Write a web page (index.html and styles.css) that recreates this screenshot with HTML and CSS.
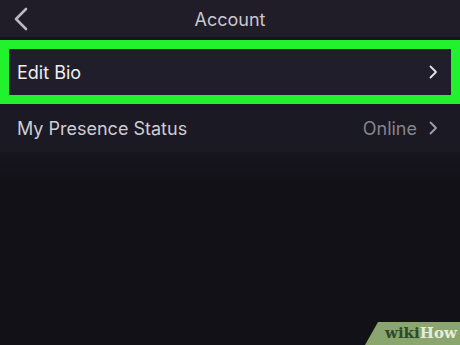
FILE: index.html
```html
<!DOCTYPE html>
<html>
<head>
<meta charset="utf-8">
<link rel="stylesheet" href="styles.css">
</head>
<body>
<div class="screen">
  <header class="nav">
    <svg class="back" width="16" height="24" viewBox="0 0 16 24"><path d="M13 2 L3 12 L13 22" fill="none" stroke="#b9b7c0" stroke-width="2.6" stroke-linecap="round" stroke-linejoin="round"/></svg>
    <div class="title">Account</div>
  </header>
  <div class="divider"></div>
  <div class="highlight">
    <div class="row row-bio">
      <span class="label">Edit Bio</span>
      <svg class="chev" width="9" height="14" viewBox="0 0 9 14"><path d="M1.5 1.5 L7 7 L1.5 12.5" fill="none" stroke="#e4e2e8" stroke-width="1.8" stroke-linecap="round" stroke-linejoin="round"/></svg>
    </div>
  </div>
  <div class="row row-status">
    <span class="label dim">My Presence Status</span>
    <span class="value">Online</span>
    <svg class="chev" width="9" height="14" viewBox="0 0 9 14"><path d="M1.5 1.5 L7 7 L1.5 12.5" fill="none" stroke="#a09ea6" stroke-width="1.8" stroke-linecap="round" stroke-linejoin="round"/></svg>
  </div>
  <div class="rest">
    <div class="wm"><span class="wiki">wiki</span><span class="how">How</span></div>
  </div>
</div>
</body>
</html>
```

FILE: styles.css
```css
html, body {
  margin: 0;
  padding: 0;
  background: #121118;
}
.screen {
  width: 460px;
  height: 345px;
  overflow: hidden;
  display: flex;
  flex-direction: column;
  font-family: Inter, "Liberation Sans", Arial, sans-serif;
  background: #121118;
}
.nav {
  height: 37px;
  background: #201d29;
  display: flex;
  align-items: center;
  justify-content: center;
  position: relative;
}
.back {
  position: absolute;
  left: 13px;
  top: 7px;
}
.title {
  color: #c9c7ce;
  font-size: 18px;
  margin-top: 2px;
}
.divider {
  height: 3px;
  background: #16141c;
}
.highlight {
  height: 46px;
  border: 9px solid #22f22d;
  background: #211e2b;
}
.row {
  display: flex;
  align-items: center;
  padding-left: 8px;
  padding-right: 13px;
  height: 100%;
}
.row .label {
  color: #eeedf1;
  font-size: 18px;
  flex: 1;
}
.row-status {
  height: 48px;
  padding-left: 17px;
  padding-right: 22px;
  background: #1b1923;
}
.row-status .label {
  color: #cfcdd4;
}
.value {
  color: #86848c;
  font-size: 18px;
  margin-right: 12px;
}
.rest {
  flex: 1;
  position: relative;
  background: linear-gradient(#17151e, #121118 30px);
}
.wm {
  position: absolute;
  right: 0;
  bottom: 0;
  width: 95px;
  height: 23px;
  background: #8aa56e;
  clip-path: polygon(13px 0, 100% 0, 100% 100%, 0 100%);
  font-family: "DejaVu Serif", serif;
  font-weight: bold;
  font-size: 15px;
  line-height: 23px;
  padding-left: 20px;
  box-sizing: border-box;
}
.wiki { color: #2e4a2a; }
.how { color: #e6ecde; }
```
